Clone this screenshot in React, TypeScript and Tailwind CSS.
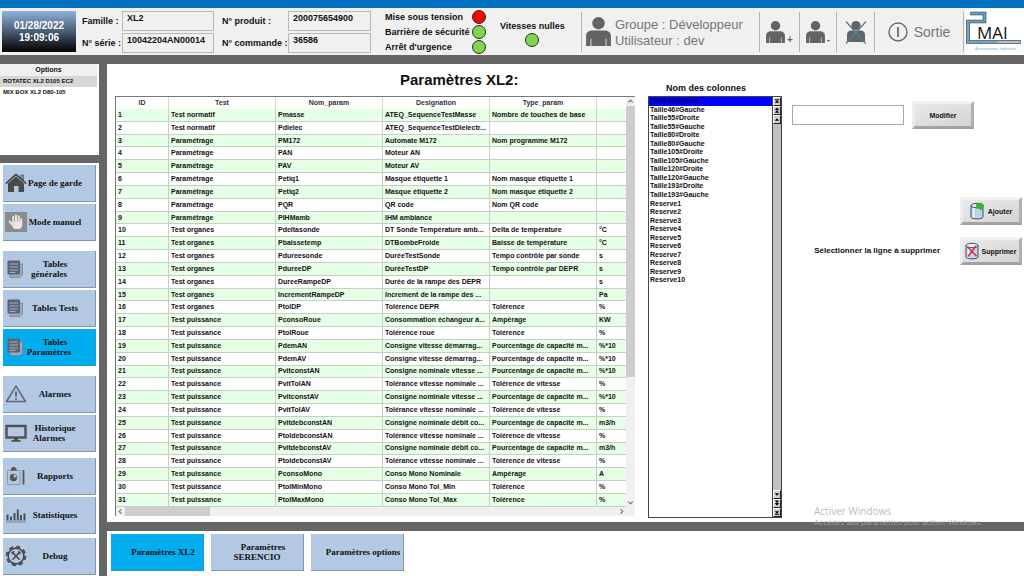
import React, { useState } from 'react';
import type { ReactNode } from 'react';
import clsx from 'clsx';

// [Test, Nom_param, Designation, Type_param, unit]
const PARAMS: string[][] = [
  ['Test normatif', 'Pmasse', 'ATEQ_SequenceTestMasse', 'Nombre de touches de base', ''],
  ['Test normatif', 'Pdielec', 'ATEQ_SequenceTestDielectr...', '', ''],
  ['Paramétrage', 'PM172', 'Automate M172', 'Nom programme M172', ''],
  ['Paramétrage', 'PAN', 'Moteur AN', '', ''],
  ['Paramétrage', 'PAV', 'Moteur AV', '', ''],
  ['Paramétrage', 'Petiq1', 'Masque étiquette 1', 'Nom masque étiquette 1', ''],
  ['Paramétrage', 'Petiq2', 'Masque étiquette 2', 'Nom masque étiquette 2', ''],
  ['Paramétrage', 'PQR', 'QR code', 'Nom QR code', ''],
  ['Paramétrage', 'PIHMamb', 'IHM ambiance', '', ''],
  ['Test organes', 'Pdeltasonde', 'DT Sonde Température amb...', 'Delta de température', '°C'],
  ['Test organes', 'Pbaissetemp', 'DTBombeFroide', 'Baisse de température', '°C'],
  ['Test organes', 'Pdureesonde', 'DuréeTestSonde', 'Tempo contrôle par sonde', 's'],
  ['Test organes', 'PdureeDP', 'DuréeTestDP', 'Tempo contrôle par DEPR', 's'],
  ['Test organes', 'DureeRampeDP', 'Durée de la rampe des DEPR', '', 's'],
  ['Test organes', 'IncrementRampeDP', 'Increment de la rampe des ...', '', 'Pa'],
  ['Test organes', 'PtolDP', 'Tolérence DEPR', 'Tolérence', '%'],
  ['Test puissance', 'PconsoRoue', 'Consommation échangeur à...', 'Ampérage', 'KW'],
  ['Test puissance', 'PtolRoue', 'Tolérence roue', 'Tolérence', '%'],
  ['Test puissance', 'PdemAN', 'Consigne vitesse démarrag...', 'Pourcentage de capacité m...', '%*10'],
  ['Test puissance', 'PdemAV', 'Consigne vitesse démarrag...', 'Pourcentage de capacité m...', '%*10'],
  ['Test puissance', 'PvitconstAN', 'Consigne nominale vitesse ...', 'Pourcentage de capacité m...', '%*10'],
  ['Test puissance', 'PvitTolAN', 'Tolérance vitesse nominale ...', 'Tolérence de vitesse', '%'],
  ['Test puissance', 'PvitconstAV', 'Consigne nominale vitesse ...', 'Pourcentage de capacité m...', '%*10'],
  ['Test puissance', 'PvitTolAV', 'Tolérance vitesse nominale ...', 'Tolérence de vitesse', '%'],
  ['Test puissance', 'PvitdebconstAN', 'Consigne nominale débit co...', 'Pourcentage de capacité m...', 'm3/h'],
  ['Test puissance', 'PtoldebconstAN', 'Tolérance vitesse nominale ...', 'Tolérence de vitesse', '%'],
  ['Test puissance', 'PvitdebconstAV', 'Consigne nominale débit co...', 'Pourcentage de capacité m...', 'm3/h'],
  ['Test puissance', 'PtoldebconstAV', 'Tolérance vitesse nominale ...', 'Tolérence de vitesse', '%'],
  ['Test puissance', 'PconsoMono', 'Conso Mono Nominale', 'Ampérage', 'A'],
  ['Test puissance', 'PtolMinMono', 'Conso Mono Tol_Min', 'Tolérence', '%'],
  ['Test puissance', 'PtolMaxMono', 'Conso Mono Tol_Max', 'Tolérence', '%'],
];

const COLONNES = [
  'Taille46#Droite', 'Taille46#Gauche', 'Taille55#Droite', 'Taille55#Gauche',
  'Taille80#Droite', 'Taille80#Gauche', 'Taille105#Droite', 'Taille105#Gauche',
  'Taille120#Droite', 'Taille120#Gauche', 'Taille193#Droite', 'Taille193#Gauche',
  'Reserve1', 'Reserve2', 'Reserve3', 'Reserve4', 'Reserve5',
  'Reserve6', 'Reserve7', 'Reserve8', 'Reserve9', 'Reserve10',
];

/* ---------- Icons ---------- */

const HouseIcon = () => (
  <svg viewBox="0 0 22 20" className="w-[22px] h-5" aria-hidden="true">
    <path d="M15.5 2h3v5l-3-2.500z" fill="#8b95a1" stroke="#555" strokeWidth=".7" />
    <path d="M3 10.500 11 3.500l8 7V19h-5.500v-6h-4.500v6H3z" fill="#4a4a4a" />
    <path d="M.8 10.600 11 1.500l10.200 9.100" fill="none" stroke="#4a4a4a" strokeWidth="1.700" />
  </svg>
);

const HandIcon = () => (
  <svg viewBox="0 0 22 20" className="w-[22px] h-5" aria-hidden="true">
    <rect width="22" height="20" fill="#8b8b8b" />
    <g stroke="#e6e6e6" strokeWidth="2" strokeLinecap="round" fill="none">
      <path d="M8.300 10V4.800M11 9.500V3.600M13.700 10V4.600M16.200 11V7M7.500 12.800 4.500 9.300" />
    </g>
    <path d="M7 9.500h10.200v3c0 2.500-1.200 4-2.700 4.500H9.500C8 16 7 14 6.500 12z" fill="#e6e6e6" />
  </svg>
);

const SheetIcon = () => (
  <svg viewBox="0 0 20 20" className="w-5 h-5" aria-hidden="true">
    <path d="M4 5h12.500v11l-2.500 2.500H4z" fill="#9ba9bb" stroke="#75808e" strokeWidth=".7" />
    <rect x="1.500" y="1.500" width="12.500" height="14" rx="1" fill="#5b6470" />
    <path d="M3.500 5h8.500M3.500 8h8.500M3.500 11h8.500M3.500 13.500h6" stroke="#9fb0c6" strokeWidth="1" />
  </svg>
);

const AlarmIcon = () => (
  <svg viewBox="0 0 22 20" className="w-[22px] h-5" fill="none" stroke="#5f6873" aria-hidden="true">
    <path d="M11 2.200 20.500 17.500h-19z" strokeWidth="1.500" strokeLinejoin="round" />
    <path d="M11 7.500v5" strokeWidth="2" />
    <path d="M11 14v1.700" strokeWidth="1.800" />
  </svg>
);

const ScreenIcon = () => (
  <svg viewBox="0 0 22 20" className="w-[22px] h-5" aria-hidden="true">
    <path d="M1.500 3h19v11.500h-19z" fill="none" stroke="#525252" strokeWidth="2.400" />
    <path d="M9 14.500h4V17h2.500v1.800h-9V17H9z" fill="#525252" />
  </svg>
);

const ReportIcon = () => (
  <svg viewBox="0 0 20 20" className="w-5 h-5" aria-hidden="true">
    <path d="M1.500 4.500h12.500v14H1.500z" fill="none" stroke="#8b98a8" />
    <path d="M4.500 4.500C5 2 6 1 7.700 1s2.800 1 3.300 3.500z" fill="#555" />
    <circle cx="7.500" cy="11.500" r="3.700" fill="#555" />
    <path d="M7.500 11.500V8.300A3.200 3.200 0 0 1 10.700 11.500z" fill="#a8bad2" />
    <path d="M17.500 4v14.500" stroke="#555" strokeWidth="1.800" />
  </svg>
);

const StatsIcon = () => (
  <svg viewBox="0 0 22 20" className="w-[22px] h-5" aria-hidden="true">
    <path d="M2.500 9.500v6M6 11.500v4M9.500 8v7.500M12.800 4.500v11M16 10v5.500M19.500 8.500v7" stroke="#4b5058" strokeWidth="2" />
    <path d="M1 17h20" stroke="#7b8797" strokeWidth="1" />
  </svg>
);

const GearIcon = () => (
  <svg viewBox="0 0 24 24" className="w-[22px] h-[22px]" fill="none" stroke="#484848" aria-hidden="true">
    <circle cx="12" cy="12" r="10.200" strokeWidth="2" strokeDasharray="4.400 3.611" />
    <circle cx="12" cy="12" r="8.600" strokeWidth="1.800" />
    <path d="m8.300 8.300 7.700 7.700M15.700 8.300 8 16" strokeWidth="1.600" />
    <path d="M7.200 9.500 10 6.800M14.600 7l2.300 2.300" strokeWidth="2" />
  </svg>
);

const UserIcon = ({ className }: { className: string }) => (
  <svg viewBox="0 0 24 28" className={className} aria-hidden="true">
    <circle cx="12" cy="6" r="6" fill="#636363" />
    <path d="M0 28V18.500C0 15 2.500 13 6 13h12c3.500 0 6 2 6 5.500V28h-4.300v-7h-.8v7H5.100v-7h-.8v7z" fill="#636363" />
  </svg>
);

// User silhouette crossed out
const UserOffIcon = () => (
  <svg viewBox="0 0 22 24" className="w-[22px] h-6" aria-hidden="true">
    <circle cx="11" cy="5.500" r="4.600" fill="#636363" />
    <path d="M2 22v-7.500C2 12 4 10.500 6.500 10.500h9c2.500 0 4.500 1.500 4.500 4V22z" fill="#636363" />
    <path d="M1 1.500 20.500 23.500M21 1.500 1 23.500" fill="none" stroke="#4d7f9f" strokeWidth="1.300" />
  </svg>
);

const PowerIcon = () => (
  <svg viewBox="0 0 20 20" className="w-5 h-5" fill="none" stroke="#6b6b6b" strokeWidth="1.400" aria-hidden="true">
    <circle cx="10" cy="10" r="9" />
    <path d="M10 5v10" strokeWidth="1.800" />
  </svg>
);

const BinIcon = ({ kind }: { kind: 'add' | 'delete' }) => (
  <svg viewBox="0 0 14 18" className="w-3.5 h-[18px] shrink-0" aria-hidden="true">
    <path d="M1 3.500v11.500c0 2.500 12 2.500 12 0V3.500" fill="#b9d6ee" stroke="#2d4054" strokeWidth=".9" />
    <path d="M3.500 5v11" stroke="#e8f5ff" strokeWidth="2" />
    <ellipse cx="7" cy="3.500" rx="6" ry="2.200" fill="#dceefa" stroke="#2d4054" strokeWidth=".9" />
    {kind === 'add' ? (
      <path d="M6 2.500 11 .5l2.500 2V6l-3 2.500-1.500-2-2.500.5z" fill="#35b52c" />
    ) : (
      <path d="m2.500 5 9 9M11 4 3 14.500" stroke="#df2340" strokeWidth="1.500" fill="none" />
    )}
  </svg>
);

const Logo = () => (
  <svg viewBox="0 0 59 46" className="w-[59px] h-[46px]" role="img" aria-label="2MAI">
    <path d="M5 4.500h14.500v8H3v20.500h53" fill="none" stroke="#3a4a55" strokeWidth="3.600" />
    <path d="M5 4.500h14.500v8H3v20.500h30" fill="none" stroke="#6ba9c8" strokeWidth="2" />
    <path d="M33 33h22.500" fill="none" stroke="#b5bdc2" strokeWidth="2" />
    <text x="12" y="30" fontSize="17" fill="#111" className="font-normal font-['Open_Sans',sans-serif]">MAI</text>
    <text x="10" y="41" fontSize="4" fill="#6db4d6" className="font-normal font-['Liberation_Sans',sans-serif]">Automatisme Industriel</text>
  </svg>
);

/* ---------- Header pieces ---------- */

const Field = ({ id, label, value, labelWidth, inputWidth }: { id: string; label: string; value: string; labelWidth: string; inputWidth: string }) => (
  <div className="flex items-center">
    <label htmlFor={id} className={clsx('whitespace-nowrap', labelWidth)}>{label}</label>
    <input
      id={id}
      readOnly
      defaultValue={value}
      className={clsx('h-5 border border-[#b9b9b9] bg-[#f0f0f0] px-1 pb-1.5', inputWidth)}
    />
  </div>
);

const Light = ({ color }: { color: string }) => (
  <span className={clsx('w-3.5 h-3.5 rounded-full border border-[#24331c] shrink-0', color)} />
);

const Status = ({ label, color }: { label: string; color: string }) => (
  <div className="flex items-center justify-between">
    <span>{label}</span>
    <Light color={color} />
  </div>
);

const HeaderCell = ({ label, className, children }: { label?: string; className: string; children: ReactNode }) => (
  <button aria-label={label} className={clsx('h-10 border-l border-[#b5b5b5] flex items-center justify-center', className)}>
    {children}
  </button>
);

/* ---------- Shared buttons ---------- */

const NavButton = ({ icon, active, onClick, children }: { icon: ReactNode; active: boolean; onClick: () => void; children: ReactNode }) => (
  <button
    onClick={onClick}
    className={clsx(
      'relative w-full h-[37px] border-r border-b text-center indent-3',
      active ? 'bg-[#00aeef] border-[#1a9ccc]' : 'bg-[#b3c9e3] border-[#8594a6]'
    )}
  >
    <span className="absolute inset-y-0 left-0.5 w-[22px] flex items-center justify-center">{icon}</span>
    <span className="relative block">{children}</span>
  </button>
);

const BevelButton = ({ children }: { children: ReactNode }) => (
  <button className="w-[62px] h-7 shrink-0 flex items-center justify-center border-[3px] border-t-[#f2f2f2] border-l-[#ececec] border-r-[#b0b0b0] border-b-[#a3a3a3] bg-linear-to-br from-[#e9e9e9] to-[#d4d4d4] text-[7px] leading-none font-bold">
    {children}
  </button>
);

const ScrollStep = ({ label, d }: { label: string; d: string }) => (
  <button aria-label={label} className="h-[9px] w-full flex items-center justify-center bg-[#d0d0d0] border border-t-white border-l-white border-r-[#222] border-b-[#222]">
    <svg viewBox="0 0 7 7" className="w-[7px] h-[7px]" aria-hidden="true"><path d={d} fill="#000" /></svg>
  </button>
);

const Chevron = ({ label, d }: { label: string; d: string }) => (
  <button aria-label={label} className="w-[9px] h-[9px] shrink-0 flex items-center justify-center">
    <svg viewBox="0 0 8 8" className="w-[7px] h-[7px]" fill="none" stroke="#666" strokeWidth="1.200" aria-hidden="true"><path d={d} /></svg>
  </button>
);

function App() {
  const [page, setPage] = useState('parametres');
  const [tab, setTab] = useState('xl2');
  const [colonne, setColonne] = useState(0);

  const nav = (id: string, icon: ReactNode, label: ReactNode) => (
    <NavButton icon={icon} active={page === id} onClick={() => setPage(id)}>{label}</NavButton>
  );

  const tabButton = (id: string, label: ReactNode) => (
    <button
      onClick={() => setTab(id)}
      className={clsx(
        'w-[93px] h-[37px] border-r border-b text-center indent-3',
        tab === id ? 'bg-[#00aeef] border-[#1a9ccc]' : 'bg-[#b3c9e3] border-[#8594a6]'
      )}
    >
      {label}
    </button>
  );

  return (
    <div className="relative min-h-screen flex flex-col bg-[#666] text-[#111] overflow-hidden font-['Liberation_Sans',Arial,sans-serif]">
      <div className="h-2 bg-[#0070c0]" />

      {/* Top bar */}
      <header className="h-[47px] flex items-center bg-[#f0f0f0] text-[9px] leading-3 font-bold">
        <div className="w-[74px] h-[41px] ml-0.5 flex flex-col items-center justify-center bg-linear-to-b from-[#8fb2dd] via-[#4a5d75] to-[#050505] text-[10px] text-white">
          <span>01/28/2022</span>
          <span>19:09:06</span>
        </div>
        <div className="flex flex-col gap-0.5 ml-1.5">
          <Field id="famille" label="Famille :" value="XL2" labelWidth="w-10" inputWidth="w-[92px]" />
          <Field id="serie" label="N° série :" value="10042204AN00014" labelWidth="w-10" inputWidth="w-[92px]" />
        </div>
        <div className="flex flex-col gap-0.5 ml-2">
          <Field id="produit" label="N° produit :" value="200075654900" labelWidth="w-[66px]" inputWidth="w-[83px]" />
          <Field id="commande" label="N° commande :" value="36586" labelWidth="w-[66px]" inputWidth="w-[83px]" />
        </div>
        <div className="w-[101px] ml-3.5 flex flex-col gap-px">
          <Status label="Mise sous tension" color="bg-[#ff0000]" />
          <Status label="Barrière de sécurité" color="bg-[#83d350]" />
          <Status label="Arrêt d'urgence" color="bg-[#83d350]" />
        </div>
        <div className="flex flex-col items-center gap-px pt-1 ml-3.5">
          <span>Vitesses nulles</span>
          <Light color="bg-[#83d350]" />
        </div>
        <div className="flex-1 h-10 ml-4 border-l border-[#b5b5b5] flex items-center gap-1 pl-1 font-normal text-[13px] leading-4 text-[#757575]">
          <UserIcon className="w-[25px] h-[29px]" />
          <div className="whitespace-nowrap pt-0.5">
            <p>Groupe : Développeur</p>
            <p>Utilisateur : dev</p>
          </div>
        </div>
        <HeaderCell label="Ajouter un utilisateur" className="w-10 gap-0.5">
          <UserIcon className="w-[19px] h-[22px]" />
          <span className="self-end pb-1.5 text-[10px] text-[#666]">+</span>
        </HeaderCell>
        <HeaderCell label="Retirer un utilisateur" className="w-[37px] gap-0.5">
          <UserIcon className="w-[19px] h-[22px]" />
          <span className="self-end pb-1.5 text-[10px] text-[#666]">-</span>
        </HeaderCell>
        <HeaderCell label="Déconnecter" className="w-[38px]">
          <UserOffIcon />
        </HeaderCell>
        <HeaderCell className="w-[90px] gap-1.5 border-r text-[14px] font-normal text-[#757575]">
          <PowerIcon />
          Sortie
        </HeaderCell>
        <div className="h-[46px] ml-px bg-white">
          <Logo />
        </div>
      </header>

      <div className="flex-1 flex gap-2 pt-[9px]">
        {/* Left column */}
        <aside className="w-[99px] shrink-0 flex flex-col gap-2">
          <section className="h-[91px] bg-white text-[7px] leading-[12px] font-bold">
            <h2 className="text-center bg-[#f0f0f0] mr-0.5">Options</h2>
            <ul className="text-[6px] leading-[11px] mr-0.5">
              <li className="bg-[#d6d6d6] pl-[3px]">ROTATEC XL2 D105 EC2</li>
              <li className="pl-[3px]">MIX BOX XL2 D80-105</li>
            </ul>
          </section>
          <nav className="flex-1 bg-white pl-[3px] pr-[3px] pt-0.5 pb-px font-['Liberation_Serif',serif] font-bold text-[9px] leading-[10px]">
            <div className="flex flex-col gap-0.5">
              {nav('garde', <HouseIcon />, 'Page de garde')}
              {nav('manuel', <HandIcon />, 'Mode manuel')}
            </div>
            <div className="flex flex-col gap-0.5 mt-2.5">
              {nav('generales', <SheetIcon />, <>Tables<br />générales</>)}
              {nav('tests', <SheetIcon />, 'Tables Tests')}
              {nav('parametres', <SheetIcon />, <>Tables<br />Paramètres</>)}
            </div>
            <div className="flex flex-col gap-0.5 mt-2.5">
              {nav('alarmes', <AlarmIcon />, 'Alarmes')}
              {nav('historique', <ScreenIcon />, <>Historique<br />Alarmes</>)}
            </div>
            <div className="flex flex-col gap-0.5 mt-1.5">
              {nav('rapports', <ReportIcon />, 'Rapports')}
              {nav('stats', <StatsIcon />, 'Statistiques')}
            </div>
            <div className="mt-1">{nav('debug', <GearIcon />, 'Debug')}</div>
          </nav>
        </aside>

        <div className="flex-1 min-w-0 flex flex-col gap-[9px]">
          <main className="flex-1 flex bg-white pl-2 pb-1">
            {/* Parameters table */}
            <section className="flex-1 flex flex-col">
              <h1 className="h-8 flex items-center pl-[285px] text-[15px] font-bold">Paramètres XL2:</h1>
              <div className="flex border-t border-l border-[#777]">
                <table className="flex-1 h-[410px] table-fixed border-separate border-spacing-0 text-[7px] leading-[8px] font-bold">
                  <colgroup>
                    <col className="w-[53px]" />
                    <col className="w-[107px]" />
                    <col className="w-[107px]" />
                    <col className="w-[107px]" />
                    <col className="w-[107px]" />
                    <col />
                  </colgroup>
                  <thead>
                    <tr className="h-3">
                      {['ID', 'Test', 'Nom_param', 'Designation', 'Type_param', ''].map((h) => (
                        <th key={h} className="p-0 border-r border-[#d8d8d8] font-bold text-[#333] last:border-r-0">{h}</th>
                      ))}
                    </tr>
                  </thead>
                  <tbody>
                    {PARAMS.map((row, i) => (
                      <tr key={i} className="h-3 odd:bg-[#e6ffe6]">
                        {[String(i + 1), ...row].map((cell, j) => (
                          <td key={j} className="p-0 pl-0.5 border-r border-b border-[#c4d0c4] last:border-r-0 whitespace-nowrap overflow-hidden">
                            {cell}
                          </td>
                        ))}
                      </tr>
                    ))}
                  </tbody>
                </table>
                <div className="w-[9px] flex flex-col bg-[#f0f0f0]">
                  <Chevron label="Défiler vers le haut" d="M1.500 5 4 2.500 6.500 5" />
                  <div className="h-[271px] bg-[#cdcdcd]" />
                  <div className="flex-1" />
                  <Chevron label="Défiler vers le bas" d="M1.500 3 4 5.500 6.500 3" />
                </div>
              </div>
              <div className="flex h-[9px] border-l border-[#777] bg-[#f0f0f0] pr-[9px]">
                <Chevron label="Défiler à gauche" d="M5 1.500 2.500 4 5 6.500" />
                <div className="w-[85px] bg-[#cdcdcd]" />
                <div className="flex-1" />
                <Chevron label="Défiler à droite" d="M3 1.500 5.500 4 3 6.500" />
              </div>
            </section>

            {/* Column names */}
            <section className="w-[134px] shrink-0 ml-[13px] flex flex-col">
              <h2 id="colonnes" className="h-8 flex items-end pb-px pl-[18px] text-[9px] font-bold">Nom des colonnes</h2>
              <div className="flex-1 flex border border-[#444]">
                <ul role="listbox" aria-labelledby="colonnes" className="flex-1 h-47 grid auto-rows-fr text-[7px] leading-[8px] font-bold">
                  {COLONNES.map((name, i) => (
                    <li
                      key={name}
                      role="option"
                      aria-selected={i === colonne}
                      onClick={() => setColonne(i)}
                      className={clsx('pl-px cursor-default', i === colonne && 'bg-[#0000ff] text-[#000060]')}
                    >
                      {name}
                    </li>
                  ))}
                </ul>
                <div className="w-[9px] flex flex-col bg-[#c0c0c0] border-l border-[#444]">
                  <ScrollStep label="Première colonne" d="M1 1h5v1H1zM3.500 2 6 5H1z" />
                  <ScrollStep label="Page précédente" d="M3.500 0 6 3H1zM3.500 3 6 6H1z" />
                  <ScrollStep label="Colonne précédente" d="M3.500 2 6 5H1z" />
                  <div className="flex-1" />
                  <ScrollStep label="Colonne suivante" d="M3.500 5 6 2H1z" />
                  <ScrollStep label="Page suivante" d="M3.500 3 6 0H1zM3.500 6 6 3H1z" />
                  <ScrollStep label="Dernière colonne" d="M1 5h5v1H1zM3.500 5 6 2H1z" />
                </div>
              </div>
            </section>

            {/* Actions */}
            <section className="w-[232px] shrink-0 ml-2.5 pt-[37px] pr-0.5 flex flex-col">
              <div className="flex items-center gap-2">
                <input aria-label="Nouveau nom de colonne" className="w-28 h-5 border border-[#a8a8a8] bg-white px-1 text-[9px]" />
                <BevelButton>Modifier</BevelButton>
              </div>
              <div className="mt-[68px] flex justify-end">
                <BevelButton>
                  <span className="flex items-center gap-1"><BinIcon kind="add" />Ajouter</span>
                </BevelButton>
              </div>
              <div className="mt-3 flex items-center justify-end gap-5">
                <span className="text-[8px] font-bold whitespace-nowrap">Sélectionner la ligne à supprimer</span>
                <BevelButton>
                  <span className="flex items-center gap-0.5"><BinIcon kind="delete" />Supprimer</span>
                </BevelButton>
              </div>
            </section>
          </main>

          {/* Table tabs */}
          <footer className="h-[45px] bg-white flex gap-[7px] pl-1 pt-[3px] font-['Liberation_Serif',serif] font-bold text-[9px] leading-[10px]">
            {tabButton('xl2', 'Paramètres XL2')}
            {tabButton('serencio', <>Paramètres<br />SERENCIO</>)}
            {tabButton('options', 'Paramètres options')}
          </footer>
        </div>
      </div>

      {/* Windows activation watermark, drawn above everything */}
      <div className="absolute right-11 bottom-[47px] w-[166px] pointer-events-none whitespace-nowrap text-[#a9a9a9]/80">
        <p className="font-['Open_Sans',sans-serif] text-[10px] leading-3">Activer Windows</p>
        <p className="font-[Roboto,sans-serif] text-[8px] leading-3">Accédez aux paramètres pour activer Windows.</p>
      </div>
    </div>
  );
}

export default App;
